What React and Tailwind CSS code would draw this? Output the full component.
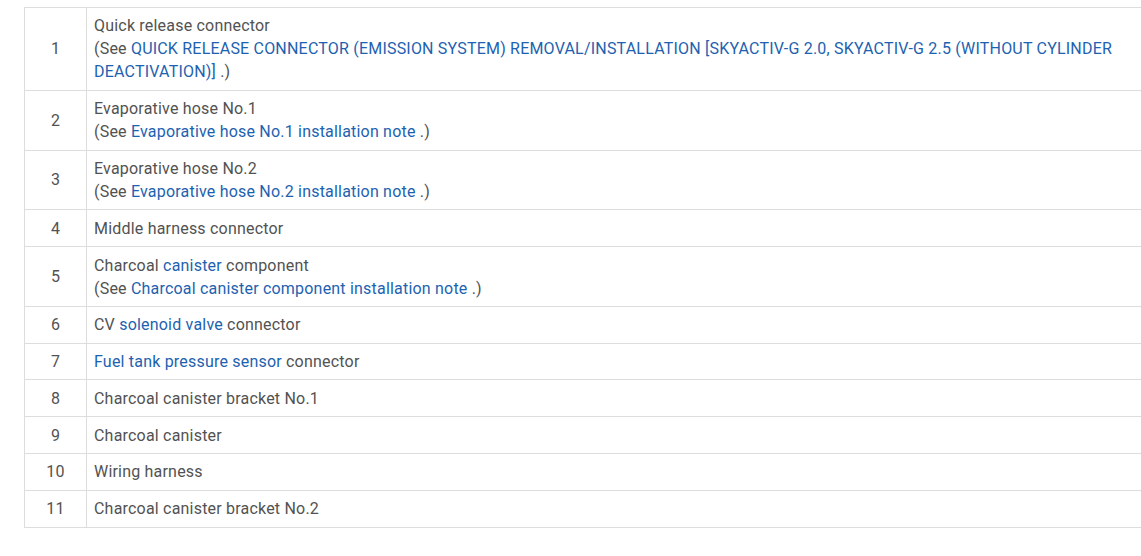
import React from "react";

const link = "text-[#1d62b0]";

const rows = [
  {
    no: "1",
    body: (
      <>
        Quick release connector
        <br />
        (See{" "}
        <span className={link}>
          QUICK RELEASE CONNECTOR (EMISSION SYSTEM) REMOVAL/INSTALLATION [SKYACTIV-G 2.0, SKYACTIV-G 2.5 (WITHOUT CYLINDER DEACTIVATION)]
        </span>{" "}
        .)
      </>
    ),
  },
  {
    no: "2",
    body: (
      <>
        Evaporative hose No.1
        <br />
        (See <span className={link}>Evaporative hose No.1 installation note</span> .)
      </>
    ),
  },
  {
    no: "3",
    body: (
      <>
        Evaporative hose No.2
        <br />
        (See <span className={link}>Evaporative hose No.2 installation note</span> .)
      </>
    ),
  },
  { no: "4", body: "Middle harness connector" },
  {
    no: "5",
    body: (
      <>
        Charcoal <span className={link}>canister</span> component
        <br />
        (See <span className={link}>Charcoal canister component installation note</span> .)
      </>
    ),
  },
  {
    no: "6",
    body: (
      <>
        CV <span className={link}>solenoid valve</span> connector
      </>
    ),
  },
  {
    no: "7",
    body: (
      <>
        <span className={link}>Fuel tank pressure sensor</span> connector
      </>
    ),
  },
  { no: "8", body: "Charcoal canister bracket No.1" },
  { no: "9", body: "Charcoal canister" },
  { no: "10", body: "Wiring harness" },
  { no: "11", body: "Charcoal canister bracket No.2" },
];

export default function App() {
  return (
    <div
      className="bg-white h-[556px] overflow-hidden pt-[7px] pl-[24px]"
      style={{ fontFamily: "Roboto, 'Liberation Sans', sans-serif" }}
    >
      <table className="w-[1126px] border-collapse text-[16px] tracking-[0.2px] leading-[23px] text-[#525252]">
        <tbody>
          {rows.map((r) => (
            <tr key={r.no}>
              <td className="w-[62px] border border-[#dddddd] text-center align-middle py-[6.4px]">
                {r.no}
              </td>
              <td className="border border-[#dddddd] pl-[7px] pr-[4px] py-[6.4px] align-middle">
                {r.body}
              </td>
            </tr>
          ))}
        </tbody>
      </table>
    </div>
  );
}
